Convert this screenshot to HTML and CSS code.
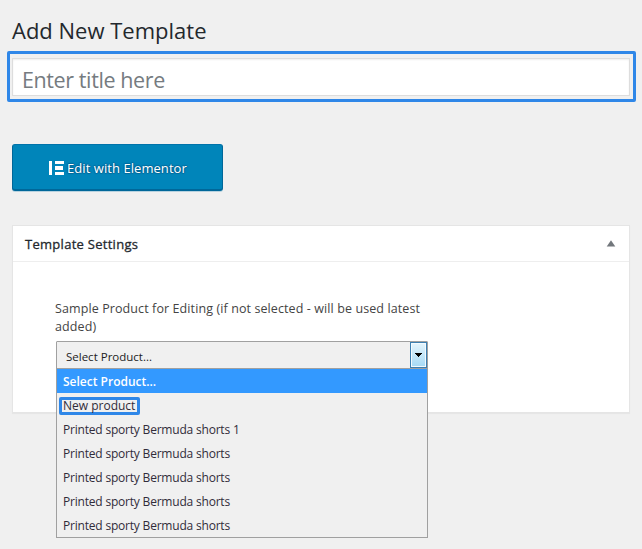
FILE: index.html
```html
<!DOCTYPE html>
<html lang="en">
<head>
<meta charset="utf-8">
<title>Add New Template</title>
<link rel="stylesheet" href="styles.css">
</head>
<body>
<main class="page">
  <h1 class="heading"><span>Add New Template</span></h1>
  <div class="title-frame"><div class="title-input"><span>Enter title here</span></div></div>
  <button class="edit-button">
    <svg class="logo" width="15" height="14" viewBox="0 0 15 14" fill="#fff" shape-rendering="crispEdges"><rect width="3" height="14"/><rect x="6" width="9" height="3"/><rect x="6" y="5" width="8" height="4"/><rect x="6" y="11" width="9" height="3"/></svg>
    <span class="edit-text">Edit with Elementor</span>
  </button>
  <section class="panel">
    <header class="panel-header">
      <h2 class="panel-title">Template Settings</h2>
      <svg class="toggle" width="10" height="7" viewBox="0 0 10 7"><path d="M5 0.3 9.3 6.5H.7Z" fill="#72777c"/></svg>
    </header>
    <div class="panel-body">
      <p class="label">Sample Product for Editing (if not selected - will be used latest<br>added)</p>
      <div class="select">
        <span class="select-value">Select Product...</span>
        <span class="select-arrow"><svg width="8" height="4" viewBox="0 0 8 4" shape-rendering="crispEdges"><path d="M0 0H7V1H6V2H5V3H4V4H3V3H2V2H1V1H0Z"/></svg></span>
        <ul class="menu">
          <li class="option selected"><span>Select Product...</span></li>
          <li class="option new"><span>New product</span></li>
          <li class="option"><span>Printed sporty Bermuda shorts 1</span></li>
          <li class="option"><span>Printed sporty Bermuda shorts</span></li>
          <li class="option"><span>Printed sporty Bermuda shorts</span></li>
          <li class="option"><span>Printed sporty Bermuda shorts</span></li>
          <li class="option"><span>Printed sporty Bermuda shorts</span></li>
        </ul>
      </div>
    </div>
  </section>
</main>
</body>
</html>
```
FILE: styles.css
```css
* { box-sizing: border-box; }
body {
  margin: 0;
  background: #f0f0f0;
  color: #23282d;
  font-family: "Open Sans", "Noto Sans", sans-serif;
  font-size: 13px;
}
.page { height: 549px; padding: 15px 12px 0; overflow: hidden; }
.heading { margin: 0; height: 36px; font-size: 22px; line-height: 30px; font-weight: 400; white-space: nowrap; }
.title-frame {
  width: 629px;
  height: 51px;
  margin-left: -5px;
  padding: 4px 3px 3px 2px;
  border: 3px solid #2f87e8;
  border-radius: 2px;
}
.title-input {
  height: 38px;
  padding: 0 9px;
  border: 1px solid #ddd;
  background: #fff;
  box-shadow: inset 0 1px 2px rgba(0, 0, 0, .07);
  color: #757b80;
  font-size: 21.5px;
  letter-spacing: -.4px;
  line-height: 41px;
  white-space: nowrap;
}
.edit-button {
  display: flex;
  align-items: center;
  width: 211px;
  height: 47px;
  margin-top: 42px;
  padding: 1px 0 0 36px;
  gap: 3px;
  border: 1px solid #006799;
  border-color: #0073aa #006799 #006799;
  border-bottom-width: 2px;
  border-radius: 3px;
  background: #0085ba;
  box-shadow: 0 1px 0 #b7d2df;
  color: #fff;
  font: 13px/18px "Open Sans", sans-serif;
  letter-spacing: .06px;
  text-shadow: 0 -1px 1px #006799, 1px 0 1px #006799, 0 1px 1px #006799, -1px 0 1px #006799;
  white-space: nowrap;
}
.edit-text { padding-top: 1px; }
.panel {
  width: 618px;
  height: 188px;
  margin-top: 34px;
  border: 1px solid #e5e5e5;
  background: #fff;
  box-shadow: 0 1px 1px rgba(0, 0, 0, .04);
}
.panel-header {
  display: flex;
  align-items: center;
  justify-content: space-between;
  height: 36px;
  padding: 0 13px 0 12px;
  border-bottom: 1px solid #eee;
}
.panel-title {
  margin: 0;
  font-size: 13px;
  font-weight: 400;
  letter-spacing: .28px;
  line-height: 18px;
  -webkit-text-stroke: .3px #23282d;
}
.panel-body { padding: 38px 42px 0; }
.label { margin: 0 0 5px; color: #444; font-size: 12.5px; letter-spacing: .1px; line-height: 18px; white-space: nowrap; }
.select {
  position: relative;
  display: flex;
  justify-content: space-between;
  width: 372px;
  height: 28px;
  margin-left: 1px;
  border: 1px solid #a0a0a0;
  border-radius: 1px;
  background: #f0f0f0;
}
.select-value { padding-left: 9px; font-size: 11.5px; line-height: 29px; color: #222; }
.select-arrow {
  display: flex;
  align-items: center;
  justify-content: center;
  width: 17px;
  height: 26px;
  border: 1px solid #3c7fb1;
  box-shadow: inset 0 0 0 1px #f2faff;
  background: linear-gradient(#e4f4fc, #a5d9f5);
}
.menu {
  position: absolute;
  top: 26px;
  left: -1px;
  width: 372px;
  height: 170px;
  margin: 0;
  padding: 0;
  border: 1px solid #a0a0a0;
  background: #f0f0f0;
  list-style: none;
}
.option {
  height: 24px;
  padding-left: 6px;
  color: #302c3a;
  font-size: 12px;
  letter-spacing: -.2px;
  line-height: 26px;
  white-space: nowrap;
}
.selected { background: #3399ff; color: #fff; font-weight: 600; letter-spacing: 0; }
.new { padding: 4px 0 0 2px; }
.new span {
  display: block;
  width: 81px;
  height: 18px;
  padding-left: 1px;
  border: 3px solid #2f87e8;
  border-radius: 2px;
  letter-spacing: 0;
  line-height: 12px;
}
```
